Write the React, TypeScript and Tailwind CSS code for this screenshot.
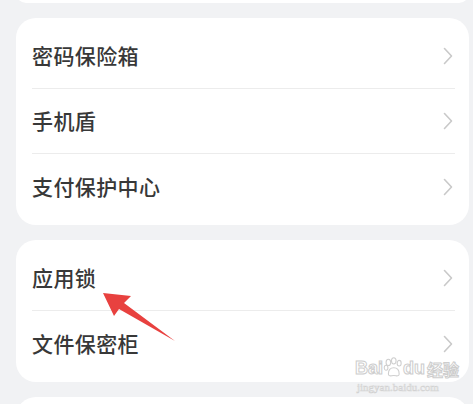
import React from 'react';

const Chevron: React.FC = () => (
  <svg width="10" height="18" viewBox="0 0 10 18" fill="none" className="shrink-0">
    <path d="M1.5 1.5L8.5 9L1.5 16.5" stroke="#c9c9c9" strokeWidth="1.6" strokeLinecap="round" strokeLinejoin="round" />
  </svg>
);

const Row: React.FC<{ label: string; last?: boolean }> = ({ label, last }) => (
  <div className="flex h-[65px] items-center pl-[16px] pr-[14px]">
    <div className={`flex h-full flex-1 items-center justify-between pr-[2px] ${last ? '' : 'border-b border-[#ececec]'}`}>
      <span className="text-[21px] font-medium text-[#383838] tracking-[0.4px]">{label}</span>
      <Chevron />
    </div>
  </div>
);

const Card: React.FC<{ items: string[] }> = ({ items }) => (
  <div className="rounded-[20px] bg-white py-[6px]">
    {items.map((item, i) => (
      <Row key={item} label={item} last={i === items.length - 1} />
    ))}
  </div>
);

const Paw: React.FC = () => (
  <svg width="20" height="20" viewBox="0 0 26 26" fill="white" stroke="#cfcfcf" strokeWidth="1.4">
    <ellipse cx="7" cy="7" rx="3" ry="4" />
    <ellipse cx="14" cy="5" rx="3" ry="4" />
    <ellipse cx="21" cy="8" rx="2.6" ry="3.6" />
    <ellipse cx="4" cy="14" rx="2.4" ry="3.2" />
    <path d="M7 22c0-5 3-8 7-8s7 3 7 8c0 2-2 3-4 2.4-2-.6-4-.6-6 0C9 25 7 24 7 22z" />
  </svg>
);

export default function App() {
  return (
    <div
      className="relative h-[404px] w-[473px] overflow-hidden bg-[#f1f2f4] pl-[16px] pr-[4px]"
      style={{ fontFamily: '"Noto Sans CJK SC", "Noto Sans", sans-serif' }}
    >
      <div className="flex flex-col gap-[15px]">
        <div className="-mt-[17px] h-[20px] rounded-[20px] bg-white" />
        <Card items={['密码保险箱', '手机盾', '支付保护中心']} />
        <Card items={['应用锁', '文件保密柜']} />
        <div className="h-[40px] rounded-[20px] bg-white" />
      </div>

      <svg className="pointer-events-none absolute left-0 top-0" width="473" height="404" viewBox="0 0 473 404">
        <polygon points="103,293 131,296 124,303 175,341 119,309 114,316" fill="#e8413f" />
      </svg>

      <div className="pointer-events-none absolute left-[355px] top-[357px] flex flex-col items-start whitespace-nowrap">
        <div className="flex items-end">
          <span className="text-[18px] font-bold leading-none text-white [-webkit-text-stroke:1px_#cdcdcd]" style={{ fontFamily: '"Liberation Sans", sans-serif' }}>Bai</span>
          <Paw />
          <span className="text-[18px] font-bold leading-none text-white [-webkit-text-stroke:1px_#cdcdcd]" style={{ fontFamily: '"Liberation Sans", sans-serif' }}>du</span>
          <span className="ml-[2px] text-[16px] font-bold leading-none text-white [-webkit-text-stroke:1px_#cdcdcd]">经验</span>
        </div>
        <span className="mt-[5px] pl-[2px] text-[11px] leading-none text-white [-webkit-text-stroke:0.6px_#d2d2d2]" style={{ fontFamily: '"Liberation Serif", serif' }}>jingyan.baidu.com</span>
      </div>
    </div>
  );
}
